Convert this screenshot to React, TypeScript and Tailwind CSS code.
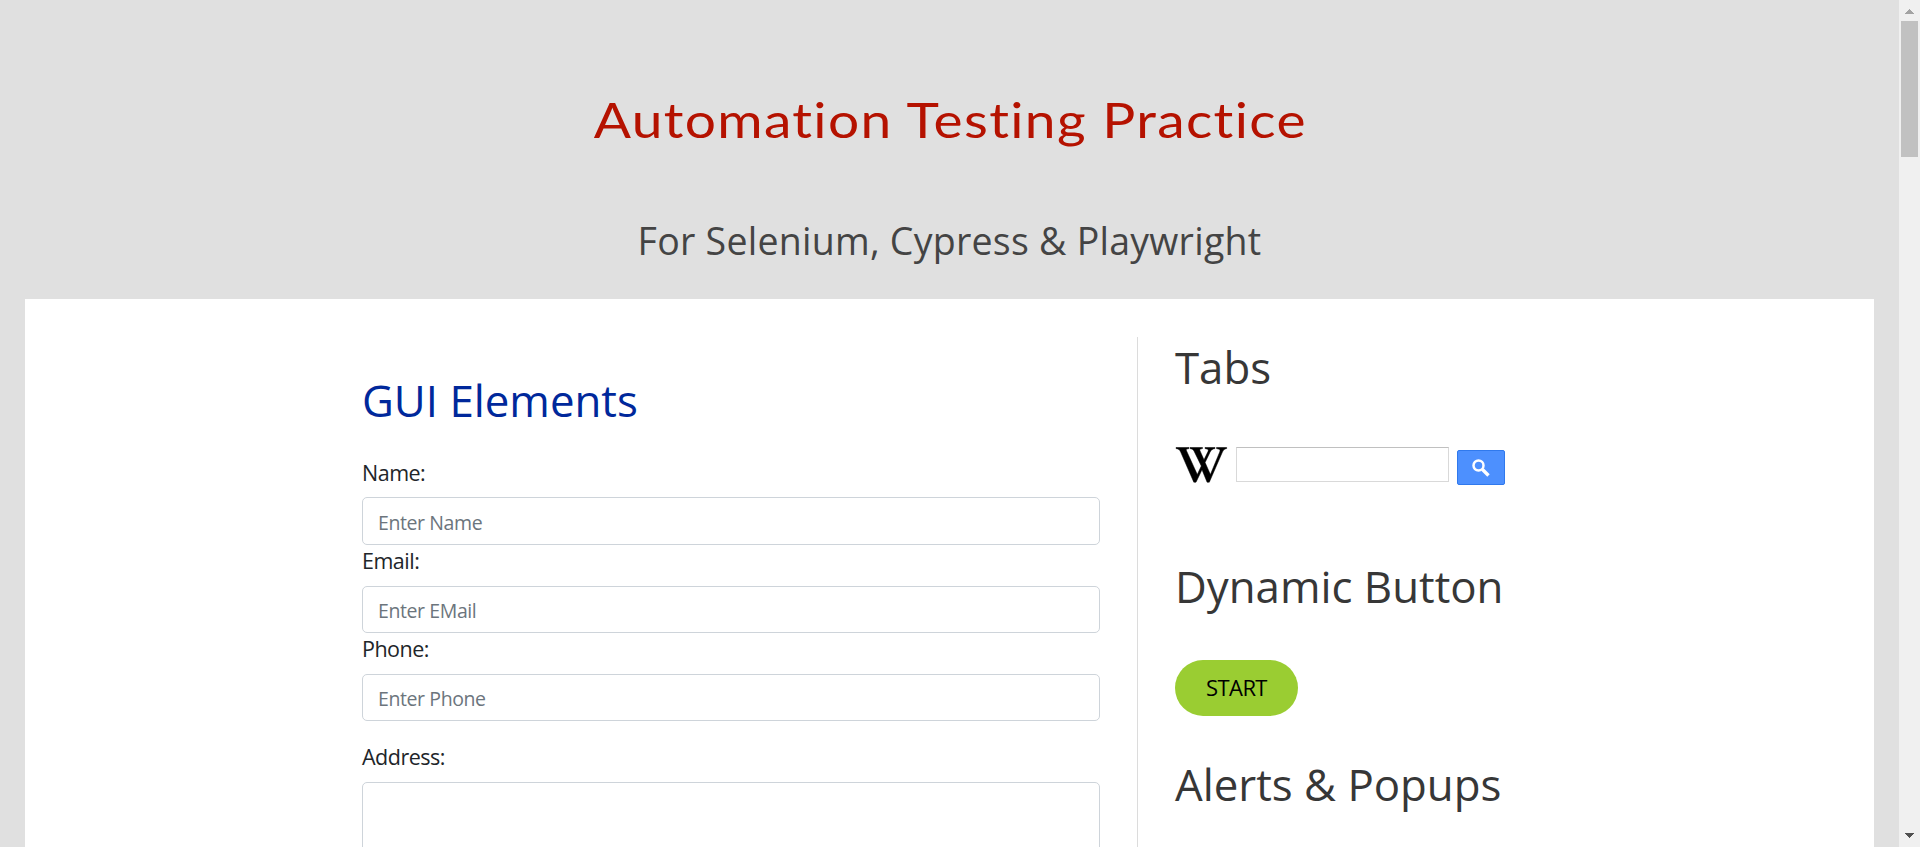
import type { ReactNode } from "react";

function Heading({ children, className = "text-[#373737]" }: { children: ReactNode; className?: string }) {
  return <h2 className={`h-[52px] whitespace-nowrap text-[43.8px] leading-[52px] ${className}`}>{children}</h2>;
}

function Label({ children, className = "leading-8" }: { children: ReactNode; className?: string }) {
  return <label className={`mb-2 h-[33px] text-[21.5px] tracking-[-0.5px] text-[#212529] ${className}`}>{children}</label>;
}

function Field({
  label,
  placeholder,
  className,
  labelClassName,
}: {
  label: string;
  placeholder: string;
  className: string;
  labelClassName?: string;
}) {
  return (
    <div className="flex flex-col items-start">
      <Label className={labelClassName}>{label}</Label>
      <input
        placeholder={placeholder}
        className={`w-[738px] rounded-[5px] border border-[#ced4da] bg-white px-[15px] text-[19.5px] tracking-[-0.4px] placeholder:text-[#6c757d] ${className}`}
      />
    </div>
  );
}

function WikipediaLogo() {
  return (
    <svg className="h-9 w-[53px]" viewBox="0 0 53 36" fill="#000" stroke="#000" strokeWidth="0.5">
      <path d="M1 .5h13v1l-2.200.6c-.6.3-.6.900-.2 1.900L22.300 27.500l4-8.500L19.200 4.400C18.300 2.600 17.400 2 15 1.500v-1h12.500v1l-2 .6c-.8.300-.8 1-.4 1.900L29 12.800l4-8.300c.7-1.600.2-2.200-1.300-2.500l-1.700-.5v-1h10v1c-2.700.5-3.700 1.300-5 3.800l-4.900 10.200L35.400 27.500 44.700 5c.8-2 .2-2.600-1.500-3l-1.700-.5v-1H51.700v1c-2.600.5-3.400 1.500-4.600 4.300L34.300 35.200h-2.200l-5.100-12.500-6 12.500h-2.200L5.900 5.600C4.800 2.600 3.500 2 1 1.500z" />
    </svg>
  );
}

function Scrollbar() {
  return (
    <div className="flex h-full w-[21px] shrink-0 flex-col items-center bg-[#f0f0f0]">
      <div className="flex h-[21px] w-full justify-center pt-[9px]">
        <svg className="h-[5px] w-[9px]" viewBox="0 0 9 5" shapeRendering="crispEdges">
          <path d="M0 5 4.500 0 9 5z" fill="#a3a3a3" />
        </svg>
      </div>
      <div className="h-[136px] w-[17px] bg-[#c1c1c1]" />
      <div className="mt-auto flex h-[21px] w-full justify-center pt-[7px]">
        <svg className="h-[5px] w-[9px]" viewBox="0 0 9 5" shapeRendering="crispEdges">
          <path d="M0 0h9L4.500 5z" fill="#505050" />
        </svg>
      </div>
    </div>
  );
}

export default function App() {
  return (
    <div className="flex h-[847px] w-[1920px] overflow-hidden bg-[#e0e0e0] font-['Open_Sans',sans-serif]">
      <div className="flex min-w-0 flex-1 flex-col px-[25px]">
        <header className="flex h-[299px] shrink-0 flex-col items-center whitespace-nowrap">
          <h1 className="mt-[87px] h-16 scale-x-[1.124] pl-px font-['Lato',sans-serif] text-[49px] font-normal leading-[64px] tracking-[1.2px] text-[#b51200] [font-variant-ligatures:none]">
            Automation Testing Practice
          </h1>
          <p className="mt-[66px] h-12 text-[37.500px] leading-[48px] tracking-[0.25px] text-[#444]">
            For Selenium, Cypress &amp; Playwright
          </p>
        </header>
        <main className="flex min-h-0 flex-1 bg-white pl-[337px] pt-[38px]">
          <section className="w-[776px] shrink-0 border-r border-[#dcdcdc] pt-[37px]">
            <Heading className="mb-[30px] text-[#00289b]">GUI Elements</Heading>
            <Field label="Name:" placeholder="Enter Name" className="h-12 pt-[3px]" labelClassName="leading-[34px]" />
            <Field label="Email:" placeholder="Enter EMail" className="h-[47px] pt-[2px]" />
            <Field label="Phone:" placeholder="Enter Phone" className="h-[47px] pt-[2px]" />
            <div className="mt-5 flex flex-col items-start">
              <Label>Address:</Label>
              <textarea className="h-[120px] w-[738px] resize-none rounded-[5px] border border-[#ced4da]" />
            </div>
          </section>
          <aside className="pl-[37px] pt-1">
            <Heading>Tabs</Heading>
            <div className="mt-[54px] flex h-[38px] items-start">
              <WikipediaLogo />
              <input className="ml-2 h-[35px] w-[213px] border border-[#d9d9d9] border-t-[#c0c0c0] bg-white" />
              <button className="ml-2 mt-[3px] flex h-[35px] w-12 items-center justify-center rounded-[2px] border border-[#3079ed] bg-[#4d90fe]">
                <svg className="h-[18px] w-[18px]" viewBox="0 0 18 18" fill="none" stroke="#fff">
                  <circle cx="6.500" cy="6.500" r="5" strokeWidth="2.500" />
                  <path d="m10.500 10.500 6 6" strokeWidth="3.400" />
                </svg>
              </button>
            </div>
            <Heading className="mt-[75px] text-[#373737]">Dynamic Button</Heading>
            <button className="mt-12 h-14 w-[123px] rounded-full bg-[#9acd32] pb-px text-[22px] tracking-[-0.6px] text-black">
              START
            </button>
            <Heading className="mt-[42px] text-[#373737]">Alerts &amp; Popups</Heading>
          </aside>
        </main>
      </div>
      <Scrollbar />
    </div>
  );
}
